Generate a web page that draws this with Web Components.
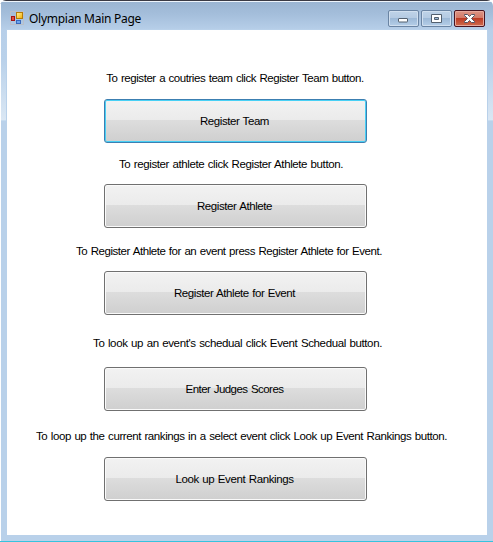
<!DOCTYPE html>
<html lang="en">
<head>
<meta charset="utf-8">
<title>Olympian Main Page</title>
<style>
html, body { margin: 0; height: 100%; overflow: hidden; background: #fff; }
body { font-family: "Liberation Sans", Arial, sans-serif; font-size: 11.5px; color: #000; }
</style>
</head>
<body>
<app-window>
  <title-bar slot="title"><fit-text w="112">Olympian Main Page</fit-text></title-bar>
  <menu-entry style="--top:39px;--gap:11px;--shift:-.5px">
    <fit-text slot="hint" w="257.5">To register a coutries team click Register Team button.</fit-text>
    <push-button focused><fit-text w="69">Register Team</fit-text></push-button>
  </menu-entry>
  <menu-entry style="--top:12px;--gap:10px;--shift:-4.5px">
    <fit-text slot="hint" w="224">To register athlete click Register Athlete button.</fit-text>
    <push-button><fit-text w="75">Register Athlete</fit-text></push-button>
  </menu-entry>
  <menu-entry style="--top:14px;--gap:10px;--shift:-6.5px">
    <fit-text slot="hint" w="306">To Register Athlete for an event press Register Athlete for Event.</fit-text>
    <push-button><fit-text w="121">Register Athlete for Event</fit-text></push-button>
  </menu-entry>
  <menu-entry style="--top:19px;--gap:14px;--shift:2px">
    <fit-text slot="hint" w="289">To look up an event's schedual click Event Schedual button.</fit-text>
    <push-button><fit-text w="98">Enter Judges Scores</fit-text></push-button>
  </menu-entry>
  <menu-entry style="--top:16px;--gap:11px;--shift:6px">
    <fit-text slot="hint" w="411">To loop up the current rankings in a select event click Look up Event Rankings button.</fit-text>
    <push-button><fit-text w="118">Look up Event Rankings</fit-text></push-button>
  </menu-entry>
</app-window>
<script>
function define(name, markup, setup) {
  customElements.define(name, class extends HTMLElement {
    connectedCallback() {
      if (this.shadowRoot) return;
      this.attachShadow({ mode: "open" }).innerHTML = markup;
      if (setup) setup(this);
    }
  });
}

define("app-window", `<style>
:host { display: flex; flex-direction: column; box-sizing: border-box; width: 493px; height: 542px;
  padding: 2px 6px 7px 7px; border-radius: 6px 6px 0 0;
  background:
    linear-gradient(#36c3de,#36c3de) 0 100%/100% 1px no-repeat,
    linear-gradient(#3a3a44,#3a3a44) 0 0/100% 1px no-repeat,
    linear-gradient(#fff,#fff) 0 4px/1px 100% no-repeat,
    linear-gradient(#eef5fc,#eef5fc) 0 1px/100% 1px no-repeat,
    linear-gradient(#c5dbef,#c5dbef) 0 120px/100% 1px no-repeat,
    linear-gradient(#99b4d1 0,#a4bedb 14px,#b7cfe9 30px,#b9d1ea 60px,#dae7f4 120px,#b9d1ea 121px,#b9d1ea 100%); }
main { flex: 1; background: #fff; display: flex; flex-direction: column; overflow: hidden; box-shadow: 0 0 0 1px #b9d1ea; }
</style><slot name="title"></slot><main><slot></slot></main>`);

define("title-bar", `<style>
:host { display: flex; height: 28px; box-sizing: border-box; align-items: flex-start; padding: 8px 2px 0 3px;
  font-family: "Noto Sans", "Open Sans", sans-serif; font-size: 12px; }
.logo { width: 14px; height: 15px; margin-top: 1px; margin-right: 5px; flex: none; }
.name { flex: 1; line-height: 17px; }
.controls { display: flex; gap: 2px; }
</style>
<svg class="logo" viewBox="0 0 14 15">
<defs><linearGradient id="y" x2="1" y2="1"><stop stop-color="#fff3a0"/><stop offset="1" stop-color="#f2ad00"/></linearGradient></defs>
<rect x=".5" y=".5" width="13" height="13" fill="none" stroke="#b9bfc9"/>
<rect x="6.5" y="1.5" width="6" height="6" fill="url(#y)" stroke="#b57b06"/>
<rect x="1.5" y="5.5" width="3" height="4" fill="#e05040" stroke="#a41414"/>
<rect x="6.5" y="9.5" width="4" height="3" fill="#6da5ee" stroke="#3768bd"/></svg>
<span class="name"><slot></slot></span>
<span class="controls"><caption-button kind="min"></caption-button><caption-button kind="max"></caption-button><caption-button kind="close"></caption-button></span>`);

const glyphs = {
  min: '<rect x="10.5" y="8.5" width="9" height="3.5" rx=".5" fill="#fff" stroke="#53606f"/>',
  max: '<path d="M10.5 4.5h10v8h-10zM13.5 7.5v2h4v-2z" fill="#fff" fill-rule="evenodd" stroke="#53606f"/>',
  close: '<path d="M10.5 4.5h3l2 2 2-2h3v1l-3 3 3 3v1h-3l-2-2-2 2h-3v-1l3-3-3-3z" fill="#fff" stroke="#535666"/>'
};
define("caption-button", `<style>
:host { display: block; width: 31px; height: 17px; box-sizing: border-box; border: 1px solid #6a84a3; border-radius: 2px;
  box-shadow: inset 0 0 0 1px #d0dfef;
  background: linear-gradient(#bfd3e8 0,#b4cae2 48%,#9db9d7 50%,#b5cee8 100%); }
:host([kind=close]) { border-color: #481420; box-shadow: inset 0 0 0 1px #e7a89c;
  background: linear-gradient(#dc9485 0,#d37866 48%,#bd3b25 50%,#cf6c4d 100%); }
svg { display: block; margin: -1px; width: 31px; height: 17px; }
</style><svg viewBox="0 0 31 17"></svg>`, el => {
  el.shadowRoot.querySelector("svg").innerHTML = glyphs[el.getAttribute("kind")];
});

define("menu-entry", `<style>
:host { display: flex; flex-direction: column; align-items: center; padding-top: var(--top); padding-right: 23px; flex: none; word-spacing: .7px; }
.hint { height: 19px; line-height: 19px; margin-bottom: var(--gap); transform: translateX(var(--shift)); }
</style><div class="hint"><slot name="hint"></slot></div><slot></slot>`);

define("push-button", `<style>
:host { display: block; }
button { all: unset; box-sizing: border-box; display: flex; align-items: center; justify-content: center;
  width: 263px; height: 44px; padding-right: 2px; border: 1px solid #707070; border-radius: 3px;
  box-shadow: inset 0 0 0 1px #fafafa;
  background: linear-gradient(#f2f2f2 0,#ebebeb 20px,#dddddd 20px,#cfcfcf 100%); }
:host([focused]) button { border-color: #3c7fb1; box-shadow: inset 0 0 0 1px #48d0f5; }
</style><button><slot></slot></button>`);

// Text set to a fixed advance width by spreading the difference over its letters.
define("fit-text", `<style>
:host { display: inline-block; white-space: nowrap; }
</style><span><slot></slot></span>`, el => {
  const want = +el.getAttribute("w");
  const have = el.shadowRoot.querySelector("span").getBoundingClientRect().width;
  el.style.width = want + "px";
  el.style.letterSpacing = (want - have) / el.textContent.length + "px";
});
</script>
</body>
</html>
